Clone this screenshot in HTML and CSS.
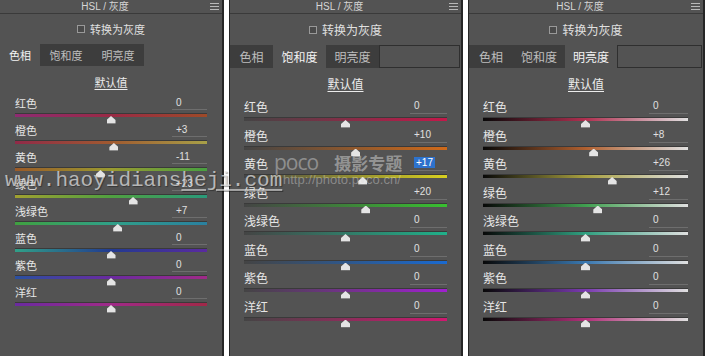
FILE: index.html
```html
<!DOCTYPE html>
<html lang="zh-CN">
<head>
    <meta charset="UTF-8">
    <meta name="viewport" content="width=device-width, initial-scale=1.0">
    <title>HSL / 灰度</title>
    <link rel="stylesheet" href="styles.css">
</head>
<body>
    <div class="board">
        <section class="panel panel-hue" data-values="0,3,-11,23,7,0,0,0">
            <div class="panel-head"><span class="panel-title">HSL / 灰度</span><span class="panel-menu"></span></div>
            <div class="gray-check"><span class="check-box"></span>转换为灰度</div>
            <div class="tabs">
                <span class="tab active">色相</span>
                <span class="tab">饱和度</span>
                <span class="tab">明亮度</span>
            </div>
            <div class="defaults"><span>默认值</span></div>
            <div class="rows"></div>
        </section>

        <section class="panel panel-sat" data-values="0,10,17,20,0,0,0,0" data-selected="2">
            <div class="panel-head"><span class="panel-title">HSL / 灰度</span><span class="panel-menu"></span></div>
            <div class="gray-check"><span class="check-box"></span>转换为灰度</div>
            <div class="tabs">
                <span class="tab">色相</span>
                <span class="tab active">饱和度</span>
                <span class="tab">明亮度</span>
                <span class="tab-rest"></span>
            </div>
            <div class="defaults"><span>默认值</span></div>
            <div class="rows"></div>
        </section>

        <section class="panel panel-lum" data-values="0,8,26,12,0,0,0,0">
            <div class="panel-head"><span class="panel-title">HSL / 灰度</span><span class="panel-menu"></span></div>
            <div class="gray-check"><span class="check-box"></span>转换为灰度</div>
            <div class="tabs">
                <span class="tab">色相</span>
                <span class="tab">饱和度</span>
                <span class="tab active">明亮度</span>
                <span class="tab-rest"></span>
            </div>
            <div class="defaults"><span>默认值</span></div>
            <div class="rows"></div>
        </section>

        <!-- watermarks lying over the screenshots -->
        <div class="mark-site">www.haoyidians<span class="mark-line">heji.com</span></div>
        <div class="mark-poco">
            <div class="poco-top"><span class="poco-word">poco</span><span class="poco-cn">摄影专题</span></div>
            <div class="poco-url">http://photo.poco.cn/</div>
        </div>
    </div>

    <script>
        const colorRows = [
            ["红色", "red"],
            ["橙色", "orange"],
            ["黄色", "yellow"],
            ["绿色", "green"],
            ["浅绿色", "aqua"],
            ["蓝色", "blue"],
            ["紫色", "purple"],
            ["洋红", "magenta"]
        ];

        document.querySelectorAll(".panel").forEach(panel => {
            const values = panel.dataset.values.split(",").map(Number);
            const selected = panel.dataset.selected;
            const rows = panel.querySelector(".rows");

            colorRows.forEach(([name, key], i) => {
                const v = values[i];
                const text = v > 0 ? "+" + v : String(v);
                const shown = String(i) === selected ? `<span class="selected">${text}</span>` : text;

                const row = document.createElement("div");
                row.className = "row";
                row.innerHTML =
                    `<div class="row-top"><span class="row-name">${name}</span><span class="row-value">${shown}</span></div>` +
                    `<div class="slider"><div class="track c-${key}"></div><span class="thumb" style="left: ${(v + 100) / 2}%"></span></div>`;
                rows.appendChild(row);
            });
        });
    </script>
</body>
</html>
```

FILE: styles.css
```css
body {
    margin: 0;
    background-color: #fff;
    font-family: 'Noto Sans CJK SC', sans-serif;
    color: #e2e2e2;
}

.board {
    position: relative;
    display: flex;
    gap: 5px;
    width: 705px;
    height: 356px;
    overflow: hidden;
}

.panel {
    display: flex;
    flex-direction: column;
    height: 356px;
    box-sizing: border-box;
    background-color: #535353;
    border-right: 2px solid #262626;

    --check-h: 30px;
    --tab-h: 22px;
    --def-h: 30px;
    --row-h: 27px;
    --label-h: 14px;
    --fs: 11px;
    --tab-first: 40px;
    --tab-w: 52px;
    --val-w: 35px;
    --pad-l: 15px;
    --pad-r: 15px;
}

.panel-hue {
    width: 224px;
}

.panel-sat,
.panel-lum {
    border-left: 1px solid #262626;
    --check-h: 31px;
    --tab-h: 23px;
    --def-h: 31px;
    --row-h: 28.5px;
    --label-h: 15px;
    --fs: 12px;
}

.panel-sat {
    width: 234px;
    --tab-first: 43px;
    --tab-w: 53px;
    --val-w: 37px;
    --pad-l: 14px;
    --pad-r: 14px;
}

.panel-lum {
    width: 237px;
    --tab-first: 44px;
    --tab-w: 52px;
    --val-w: 39px;
    --pad-l: 14px;
    --pad-r: 15px;
}

/* header */
.panel-head {
    display: flex;
    align-items: center;
    height: 14px;
    box-sizing: border-box;
    border-bottom: 1px solid #3a3a3a;
}

.panel-title {
    flex: 1;
    text-align: center;
    font-family: 'Liberation Sans', 'Noto Sans CJK SC', sans-serif;
    font-size: 10px;
    line-height: 13px;
    color: #d6d6d6;
}

.panel-menu {
    width: 9px;
    height: 7px;
    margin-right: 3px;
    background: repeating-linear-gradient(#b8b8b8 0 1px, transparent 1px 3px);
}

.gray-check {
    display: flex;
    align-items: center;
    justify-content: center;
    height: var(--check-h);
    font-size: var(--fs);
    color: #e0e0e0;
}

.check-box {
    width: 8px;
    height: 8px;
    box-sizing: border-box;
    margin-right: 5px;
    border: 1px solid #999;
    background-color: #4a4a4a;
}

/* tabs */
.tabs {
    display: flex;
    height: var(--tab-h);
}

.tab {
    display: flex;
    align-items: center;
    justify-content: center;
    width: var(--tab-w);
    background-color: #3d3d3d;
    color: #bdbdbd;
    font-size: var(--fs);
}

.tab:first-child {
    width: var(--tab-first);
}

.tab.active {
    background-color: #535353;
    color: #f4f4f4;
}

.tab-rest {
    flex: 1;
    margin-right: 1px;
    border: 1px solid #2f2f2f;
}

.defaults {
    height: var(--def-h);
    box-sizing: border-box;
    padding-top: 8px;
    text-align: center;
    font-size: var(--fs);
    line-height: 16px;
    color: #ececec;
}

.defaults span {
    text-decoration: underline;
    text-underline-offset: 2px;
}

/* slider rows */
.rows {
    padding: 0 var(--pad-r) 0 var(--pad-l);
}

.row {
    height: var(--row-h);
}

.row-top {
    display: flex;
    justify-content: space-between;
    height: var(--label-h);
}

.row-name {
    font-size: var(--fs);
    line-height: var(--label-h);
    color: #e6e6e6;
}

.row-value {
    width: var(--val-w);
    box-sizing: border-box;
    padding-left: 4px;
    border-bottom: 1px solid #6e6e6e;
    font-family: 'Liberation Sans', sans-serif;
    font-size: 10px;
    line-height: calc(var(--label-h) - 1px);
    color: #e0e0e0;
}

.row-value .selected {
    padding: 0 2px;
    background-color: #2d72cc;
    color: #fff;
}

.slider {
    position: relative;
    height: calc(var(--row-h) - var(--label-h));
}

.track {
    margin-top: 4px;
    height: 3px;
    box-shadow: 0 -1px 0 rgba(0, 0, 0, 0.3);
}

.thumb {
    position: absolute;
    top: 2px;
    width: 9px;
    height: 8px;
    margin-left: -4.5px;
    background: linear-gradient(#e4e4e4 85%, #8a8a8a 85%);
    clip-path: polygon(50% 0, 100% 50%, 100% 100%, 0 100%, 0 50%);
}

/* hue tracks */
.panel-hue .c-red { background: linear-gradient(90deg, #8e2a72, #9a2a45 50%, #9e4a28); }
.panel-hue .c-orange { background: linear-gradient(90deg, #902a48, #a05a30 50%, #a8a048); }
.panel-hue .c-yellow { background: linear-gradient(90deg, #9a5a28, #9a9a30 50%, #48a040); }
.panel-hue .c-green { background: linear-gradient(90deg, #a0a030, #50a040 50%, #2a9a7a); }
.panel-hue .c-aqua { background: linear-gradient(90deg, #40a040, #30a088 50%, #2a80a0); }
.panel-hue .c-blue { background: linear-gradient(90deg, #30a088, #223a90 50%, #5a2aa0); }
.panel-hue .c-purple { background: linear-gradient(90deg, #2a50a0, #6a2aa0 50%, #a02a88); }
.panel-hue .c-magenta { background: linear-gradient(90deg, #6a2aa0, #a02a88 50%, #a02848); }

/* saturation tracks */
.panel-sat .c-red { background: linear-gradient(90deg, #444, #c4184a); }
.panel-sat .c-orange { background: linear-gradient(90deg, #444, #d06a1a); }
.panel-sat .c-yellow { background: linear-gradient(90deg, #444, #d8d020); }
.panel-sat .c-green { background: linear-gradient(90deg, #444, #38c030); }
.panel-sat .c-aqua { background: linear-gradient(90deg, #444, #20b08a); }
.panel-sat .c-blue { background: linear-gradient(90deg, #444, #1a6ad0); }
.panel-sat .c-purple { background: linear-gradient(90deg, #444, #a020d0); }
.panel-sat .c-magenta { background: linear-gradient(90deg, #444, #d01870); }

/* luminance tracks */
.panel-lum .c-red { background: linear-gradient(90deg, #080808, #b03050 50%, #e0e0e0); }
.panel-lum .c-orange { background: linear-gradient(90deg, #080808, #b06030 50%, #e0e0e0); }
.panel-lum .c-yellow { background: linear-gradient(90deg, #080808, #a8a040 50%, #e0e0e0); }
.panel-lum .c-green { background: linear-gradient(90deg, #080808, #40a050 50%, #e0e0e0); }
.panel-lum .c-aqua { background: linear-gradient(90deg, #080808, #30a080 50%, #e0e0e0); }
.panel-lum .c-blue { background: linear-gradient(90deg, #080808, #3a78b0 50%, #e0e0e0); }
.panel-lum .c-purple { background: linear-gradient(90deg, #080808, #7a3ab0 50%, #e0e0e0); }
.panel-lum .c-magenta { background: linear-gradient(90deg, #080808, #b03078 50%, #e0e0e0); }

/* watermarks */
.mark-site {
    position: absolute;
    left: 5px;
    top: 170px;
    font-family: 'Liberation Mono', monospace;
    font-size: 21px;
    line-height: 21px;
    color: rgba(228, 228, 228, 0.72);
    text-shadow: 1px 1px 1px rgba(0, 0, 0, 0.35);
    white-space: nowrap;
}

.mark-line {
    text-decoration: underline;
    text-decoration-color: rgba(230, 230, 230, 0.6);
    text-underline-offset: 3px;
}

.mark-poco {
    position: absolute;
    left: 274px;
    top: 150px;
}

.poco-top {
    display: flex;
    align-items: baseline;
    height: 24px;
}

.poco-word {
    font-family: 'Open Sans', sans-serif;
    font-size: 21px;
    line-height: 24px;
    letter-spacing: -1px;
    color: rgba(255, 255, 255, 0.36);
}

.poco-cn {
    margin-left: 16px;
    font-family: 'Noto Sans CJK SC', sans-serif;
    font-size: 17px;
    font-weight: bold;
    line-height: 24px;
    color: rgba(255, 255, 255, 0.4);
}

.poco-url {
    margin: -1px 0 0 9px;
    font-family: 'Liberation Sans', sans-serif;
    font-size: 13px;
    line-height: 13px;
    color: rgba(255, 255, 255, 0.32);
}
```
